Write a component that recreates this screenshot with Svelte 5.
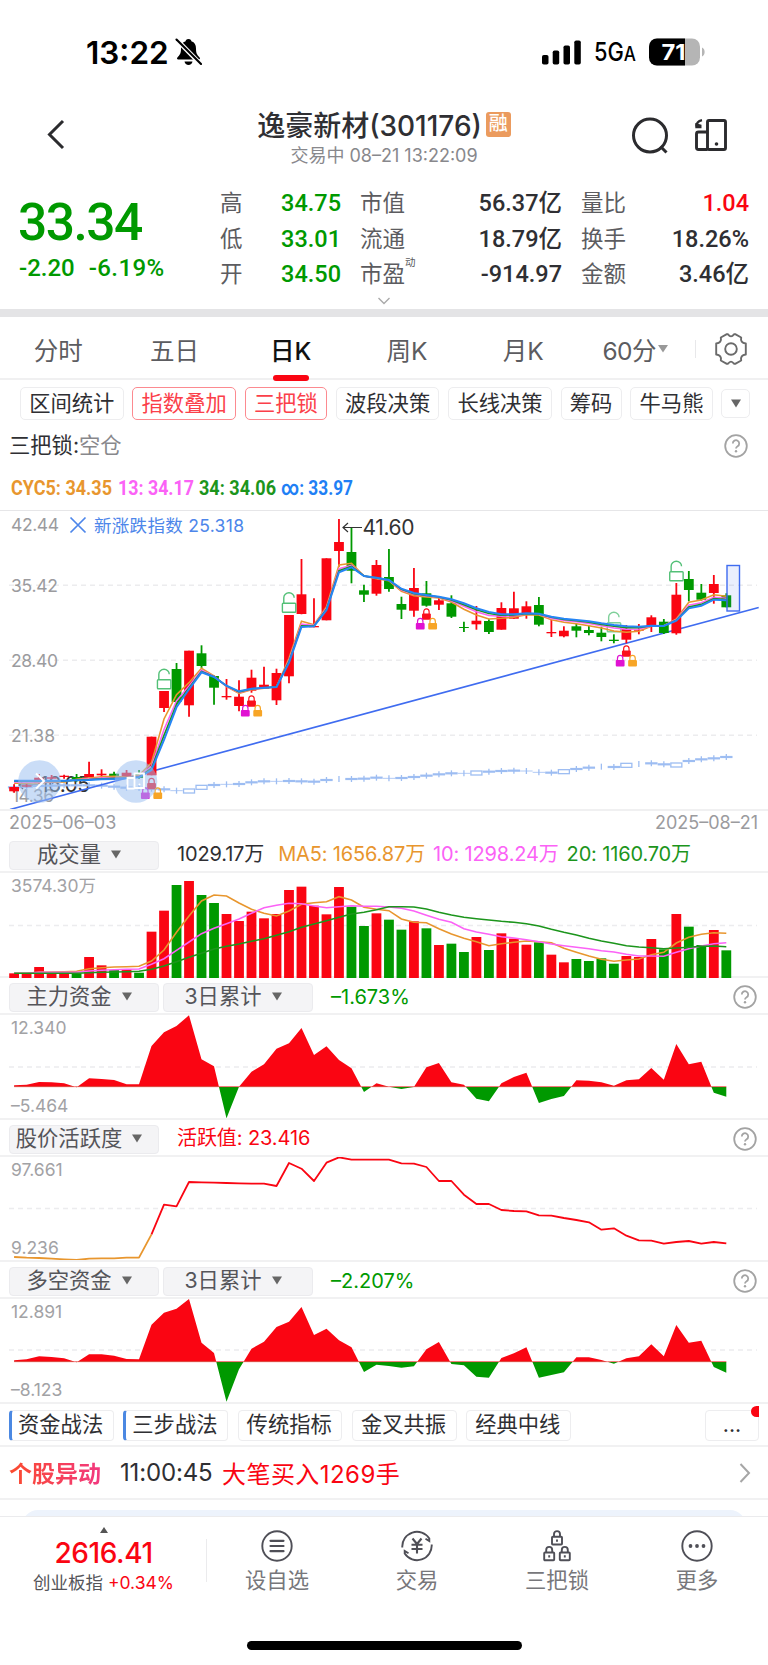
<script>
  const step = 12.495;
  const cx = (i) => 14.1 + i * step;

  // up/down, high, body top, body bottom, low
  const candles = [
    ['r', 784.3, 787, 791.3, 792.7], ['r', 782.7, 785.3, 786.7, 787.3], ['r', 774, 777.7, 783.3, 784],
    ['r', 775, 777.3, 778.7, 779.3], ['r', 774.7, 775.7, 777, 778.7], ['g', 774, 777, 779.3, 781.7],
    ['r', 761.7, 774, 777.3, 777.3], ['r', 769.3, 773.7, 775.3, 780], ['g', 771.7, 773.7, 776.7, 777.3],
    ['r', 770, 772.7, 777.3, 777.3], ['g', 770, 773.3, 778, 778.7], ['r', 736.7, 736.7, 775.3, 775.3],
    ['r', 691, 691, 708, 712], ['g', 663, 669, 702, 704], ['r', 650.7, 650.7, 705.3, 716.7],
    ['g', 645.3, 653.3, 666, 668], ['g', 675.3, 676, 687.7, 704.7], ['r', 679, 696, 697.3, 699.7],
    ['r', 680.3, 696.7, 706, 711.3], ['r', 669.7, 677.7, 690.7, 692.7], ['r', 666.7, 684.7, 688.7, 688.7],
    ['r', 668.7, 673, 700.3, 705], ['r', 615, 615, 676.3, 683.3], ['r', 559, 594.3, 614, 614.3],
    ['r', 598.3, 626, 627.3, 627.3], ['r', 558.3, 558.3, 620.3, 620.3], ['r', 519, 542, 551, 566.7],
    ['g', 527.3, 552, 570.7, 583.3], ['g', 584.7, 590.3, 594.7, 602], ['r', 560, 565, 593.7, 595.7],
    ['g', 549, 577, 589, 591.7], ['g', 596.7, 604, 609.7, 619], ['r', 568, 588, 610.7, 616.7],
    ['g', 581, 593.3, 605.7, 606.7], ['r', 596.7, 600.3, 604.7, 610], ['g', 595.3, 603.3, 616.7, 618],
    ['g', 621.7, 627, 628, 632], ['r', 606, 620.7, 624.3, 629.7], ['g', 619.3, 621, 632, 634],
    ['r', 602.3, 608, 629.7, 629.7], ['r', 591.7, 608.3, 618.7, 618.7], ['r', 601.3, 606.3, 613.3, 618.7],
    ['g', 597, 605, 624.7, 626.3], ['r', 620, 632, 633.3, 637], ['r', 626.3, 630.7, 636.3, 637.3],
    ['g', 624, 626.3, 630.7, 637.3], ['g', 626, 630, 633, 635.3], ['g', 626.7, 632.7, 637, 641.3],
    ['g', 634.3, 639.7, 641, 643.3], ['r', 625, 629, 639.7, 643.3], ['r', 624, 629.7, 630.7, 634.3],
    ['r', 615.3, 617.3, 626, 632], ['g', 619, 621.7, 633, 634], ['r', 583, 594.7, 633.3, 634.7],
    ['g', 571, 579, 590, 601.3], ['g', 584, 592.7, 599.7, 600.7], ['r', 575, 584, 593, 603.7],
    ['g', 593.3, 595.3, 607.3, 607.3]
  ];

  // line values are stored as thirds of a pixel below the given top
  const slow = [842, 842, 842, 842, 842, 841, 840, 838, 837, 835, 832, 810, 720, 622, 568, 517, 531, 557, 574, 566, 563, 561, 488, 381, 379, 330, 217, 202, 228, 233, 240, 266, 279, 285, 290, 298, 310, 325, 336, 343, 343, 340, 341, 350, 356, 360, 364, 370, 375, 379, 380, 377, 378, 362, 325, 317, 299, 301];
  const fast = [850, 850, 848, 847, 846, 838, 834, 830, 829, 832, 826, 788, 657, 584, 548, 505, 528, 560, 580, 569, 565, 560, 475, 364, 374, 320, 195, 190, 228, 236, 242, 274, 287, 291, 294, 306, 328, 345, 357, 355, 352, 344, 345, 359, 367, 371, 377, 384, 393, 397, 394, 379, 377, 357, 307, 300, 284, 289];
  const mix = (k) => slow.map((v, i) => v + (fast[i] - v) * k);

  const indexLine = [862, 860, 858, 857, 856, 856, 856, 857, 860, 863, 864, 866, 868, 872, 873, 862, 855, 853, 852, 847, 844, 844, 843, 844, 845, 840, 837, 837, 836, 833, 835, 834, 831, 827, 823, 820, 820, 819, 815, 813, 812, 813, 817, 818, 815, 807, 803, 800, 801, 796, 792, 790, 793, 795, 783, 778, 775, 771];
  const hollow = [14, 15, 37, 44, 49, 53];
  const thin = [13, 17, 21, 30, 36, 41, 42];
  const bare = [26, 47, 50];

  const volume = [430, 432, 411, 428, 430, 430, 381, 406, 420, 418, 428, 305, 242, 165, 153, 195, 219, 252, 273, 245, 265, 252, 180, 170, 227, 253, 171, 230, 288, 250, 269, 299, 274, 295, 345, 341, 366, 321, 360, 310, 326, 344, 337, 374, 397, 387, 393, 385, 401, 378, 381, 327, 358, 252, 290, 345, 300, 361];
  const volMa5 = [430, 430, 427, 426, 425, 424, 416, 413, 411, 410, 409, 393, 360, 307, 258, 213, 195, 198, 219, 238, 250, 258, 243, 223, 218, 215, 200, 210, 232, 238, 242, 267, 277, 278, 296, 312, 325, 335, 347, 341, 337, 333, 335, 338, 355, 367, 378, 388, 394, 390, 387, 374, 367, 339, 322, 313, 308, 310];
  const volMa10 = [430, 430, 427, 427, 427, 427, 423, 421, 419, 418, 417, 403, 386, 361, 336, 311, 295, 281, 267, 250, 233, 226, 220, 221, 228, 233, 230, 227, 229, 229, 231, 235, 243, 256, 268, 277, 296, 306, 313, 320, 324, 329, 335, 342, 347, 352, 356, 362, 366, 373, 378, 378, 379, 367, 356, 348, 341, 338];
  const volMa20 = [430, 430, 430, 430, 430, 430, 428, 427, 426, 425, 424, 418, 408, 395, 382, 370, 357, 349, 342, 334, 326, 316, 305, 292, 282, 272, 262, 252, 247, 239, 230, 230, 231, 237, 247, 255, 262, 266, 270, 274, 277, 281, 288, 298, 307, 315, 325, 333, 340, 347, 351, 353, 356, 354, 352, 349, 348, 350];

  const mainFlow = [766, 764, 756, 757, 760, 772, 745, 747, 750, 763, 763, 648, 607, 588, 556, 688, 709, 865, 770, 725, 703, 656, 640, 594, 675, 649, 690, 715, 786, 760, 770, 777, 771, 712, 699, 757, 764, 806, 814, 760, 741, 728, 819, 807, 798, 751, 752, 757, 767, 751, 748, 714, 749, 642, 703, 695, 788, 800];
  const bothFlow = [721, 718, 709, 711, 715, 727, 703, 703, 707, 717, 718, 614, 578, 566, 537, 668, 699, 845, 748, 686, 665, 621, 605, 561, 645, 626, 661, 682, 756, 734, 738, 743, 739, 688, 666, 732, 736, 770, 773, 714, 700, 682, 773, 765, 757, 712, 712, 720, 731, 715, 709, 673, 709, 615, 668, 662, 741, 758];
  const active = [411, 413, 414, 416, 418, 420, 416, 415, 415, 413, 413, 343, 254, 259, 186, 187, 188, 189, 190, 191, 191, 198, 129, 146, 183, 128, 112, 119, 119, 119, 119, 130, 131, 141, 183, 183, 224, 252, 252, 270, 273, 274, 286, 287, 294, 300, 307, 329, 325, 347, 361, 362, 371, 366, 363, 371, 366, 370];

  const line = (values, top, from = 0) =>
    values.map((v, i) => `${cx(i + from).toFixed(1)},${(top + v / 3).toFixed(1)}`).join(' ');

  const quotes = [
    ['高', '34.75', '市值', '56.37亿', '量比', '1.04'],
    ['低', '33.01', '流通', '18.79亿', '换手', '18.26%'],
    ['开', '34.50', '市盈', '-914.97', '金额', '3.46亿']
  ];
  const periods = ['分时', '五日', '日K', '周K', '月K'];
  const tools = ['区间统计', '指数叠加', '三把锁', '波段决策', '长线决策', '筹码', '牛马熊'];
  const methods = ['资金战法', '三步战法', '传统指标', '金叉共振', '经典中线'];

  let period = $state('日K');
  let picked = $state(['指数叠加', '三把锁']);

  const toggle = (name) => {
    picked = picked.includes(name) ? picked.filter((t) => t !== name) : [...picked, name];
  };
</script>

{#snippet help()}
  <svg class="help" width="24" height="24" viewBox="0 0 24 24">
    <circle cx="12" cy="12" r="10.8" fill="none" stroke="#a3a3a3" stroke-width="1.8" />
    <path d="M8.8 9.4a3.2 3.2 0 1 1 4.8 2.8c-1.2.7-1.6 1.2-1.6 2.4" fill="none" stroke="#a3a3a3" stroke-width="1.8" />
    <circle cx="12" cy="17.3" r="1.2" fill="#a3a3a3" />
  </svg>
{/snippet}

{#snippet caret()}
  <svg class="caret" width="10" height="9" viewBox="0 0 10 9"><path d="M0 .5h10L5 8.5z" fill="#666" /></svg>
{/snippet}

{#snippet lock(x, y, color)}
  <path d="M{x - 2.7} {y + 7}v-3.2a2.7 3 0 0 1 5.4 0v3.2" fill="none" stroke={color} stroke-width="1.2" />
  <rect x={x - 4.4} y={y + 5.4} width="8.8" height="6.4" rx="1" fill={color} />
{/snippet}

{#snippet locks(i, y)}
  {@render lock(cx(i), y, '#fa0f1c')}
  {@render lock(cx(i) - 6.2, y + 9.6, '#e012d2')}
  {@render lock(cx(i) + 6.2, y + 9.6, '#f7a526')}
{/snippet}

{#snippet unlock(i, y)}
  <g fill="none" stroke="#53c077" stroke-width="1.4">
    <rect x={cx(i) - 6.6} y={y + 10.8} width="13.4" height="9" rx="0.8" />
    <path d="M{cx(i) - 5.2} {y + 10.8}v-5.6a5.2 4.9 0 0 1 10.4 0" />
  </g>
{/snippet}

{#snippet flow(values, top, viewTop, base, grid, id)}
  <svg class="pane" width="768" height="103" viewBox="0 {viewTop} 768 103">
    <line x1="9" x2="757" y1={grid} y2={grid} class="dash" />
    <clipPath id="{id}-up"><rect x="0" y={viewTop} width="768" height={base - viewTop} /></clipPath>
    <clipPath id="{id}-down"><rect x="0" y={base} width="768" height="60" /></clipPath>
    <polygon points="{cx(0)},{base} {line(values, top)} {cx(57)},{base}" fill="#fa0512" clip-path="url(#{id}-up)" />
    <polygon points="{cx(0)},{base} {line(values, top)} {cx(57)},{base}" fill="#009900" clip-path="url(#{id}-down)" />
    <line x1={cx(0)} x2={cx(57)} y1={base} y2={base} stroke="#fa0512" stroke-width="1" opacity="0.5" />
  </svg>
{/snippet}

<div class="screen">
  <div class="status">
    <span class="clock">13:22</span>
    <svg class="bell" width="27" height="28" viewBox="0 0 27 28">
      <path d="M13.5 1c-2 0-2.800 1.200-2.900 2.200C7.300 4.300 6 7 6 10.500c0 5-1.200 6.500-3.600 9-.8.800-.4 2 .8 2h20.600c1.200 0 1.600-1.200.8-2-2.400-2.500-3.600-4-3.600-9 0-3.500-1.300-6.200-4.600-7.300C16.300 2.200 15.500 1 13.500 1z" />
      <path d="M9.500 23.500h8c-.4 2.200-1.900 3.500-4 3.500s-3.600-1.300-4-3.500z" />
      <path d="M0 0l27 27.500" stroke="#fff" stroke-width="4.600" />
      <path d="M1.500 1.500l24.500 24.500" stroke="#000" stroke-width="2.100" stroke-linecap="round" />
    </svg>
    <svg class="signal" width="40" height="25" viewBox="0 0 40 25">
      <rect x="0" y="15" width="6.500" height="9.500" rx="1.800" />
      <rect x="10.700" y="10.500" width="6.500" height="14" rx="1.800" />
      <rect x="21.500" y="5.500" width="6.500" height="19" rx="1.800" />
      <rect x="32.300" y="0.500" width="6.500" height="24" rx="1.800" />
    </svg>
    <svg class="net" width="55" height="28" viewBox="0 0 55 28">
      <text x="0" y="23" textLength="42" lengthAdjust="spacingAndGlyphs">5G<tspan font-size="20">A</tspan></text>
    </svg>
    <svg class="battery" width="56" height="28" viewBox="0 0 56 28">
      <clipPath id="cell"><rect x="0" y="0.500" width="51" height="27" rx="8" /></clipPath>
      <g clip-path="url(#cell)">
        <rect width="51" height="28" fill="#b5b5b5" />
        <rect width="36" height="28" fill="#000" />
      </g>
      <path d="M53 9.500c3.500 1.500 3.500 7.500 0 9z" fill="#b5b5b5" />
      <text x="24.500" y="22" text-anchor="middle" textLength="24" lengthAdjust="spacingAndGlyphs">71</text>
    </svg>
  </div>

  <header>
    <svg class="back" width="20" height="32" viewBox="0 0 20 32"><path d="M17 2L3.500 15.500L17 29" fill="none" stroke="#2b2b2e" stroke-width="3" /></svg>
    <div class="title">
      <div class="name">逸豪新材(301176)<span class="margin">融</span></div>
      <div class="time">交易中 08–21 13:22:09</div>
    </div>
    <svg class="search" width="40" height="40" viewBox="0 0 40 40">
      <circle cx="19" cy="19.500" r="16.500" fill="none" stroke="#2b2b2e" stroke-width="3" />
      <path d="M29.500 30.500l6 6" stroke="#2b2b2e" stroke-width="3" />
    </svg>
    <svg class="rotate" width="34" height="34" viewBox="0 0 34 34" fill="none" stroke="#2b2b2e" stroke-width="2.900">
      <rect x="13.500" y="2.500" width="18" height="29" rx="1.500" />
      <path d="M13.500 14H4.500q-2 0-2 2v13.500q0 2 2 2h9" />
      <path d="M2.500 8.500Q2.300 3.500 8 2.200" stroke-width="2.400" />
      <path d="M1.300 5v5.200h6.200V6.800z" fill="#2b2b2e" stroke="none" />
      <circle cx="22.500" cy="26" r="1.800" fill="#2b2b2e" stroke="none" />
    </svg>
  </header>

  <section class="quote">
    <div class="last">
      <strong>33.34</strong>
      <span>-2.20</span><span class="pct">-6.19%</span>
    </div>
    <div class="grid">
      {#each quotes as row, r}
        <span class="key">{row[0]}</span><span class="val down">{row[1]}</span>
        <span class="key">{row[2]}{#if r === 2}<sup>动</sup>{/if}</span><span class="val">{row[3]}</span>
        <span class="key">{row[4]}</span><span class="val" class:up={r === 0}>{row[5]}</span>
      {/each}
    </div>
    <svg class="more" width="14" height="8" viewBox="0 0 14 8"><path d="M1.500 1L7 6.500L12.500 1" fill="none" stroke="#aaa" stroke-width="1.400" /></svg>
  </section>

  <nav class="periods">
    {#each periods as p}
      <button class:on={period === p} onclick={() => (period = p)}>{p}</button>
    {/each}
    <button class="minutes">60分<svg width="10" height="8" viewBox="0 0 10 8"><path d="M0 0h10L5 7.500z" fill="#999" /></svg></button>
    <i class="sep"></i>
    <svg class="gear" width="34" height="34" viewBox="-17 -17 34 34" fill="none" stroke="#6a6a6a" stroke-width="1.900" stroke-linejoin="round">
      <path d="M-4.200 -14.800H-3Q0 -10.500 3 -14.800H4.200L10.200 -11.500Q9 -6.300 14.800 -5.500V5.500Q9 6.300 10.200 11.500L4.200 14.800H3Q0 10.500 -3 14.800H-4.200L-10.200 11.500Q-9 6.300 -14.800 5.500V-5.500Q-9 -6.300 -10.200 -11.500Z" />
      <circle r="5.800" />
    </svg>
  </nav>

  <div class="tools">
    {#each tools as t}
      <button class:on={picked.includes(t)} onclick={() => toggle(t)}>{t}</button>
    {/each}
    <button class="drop">{@render caret()}</button>
  </div>

  <div class="state"><span>三把锁:<em>空仓</em></span>{@render help()}</div>

  <svg class="legend" width="768" height="43" viewBox="0 0 768 43">
    <text x="11" y="27" textLength="101" lengthAdjust="spacingAndGlyphs" fill="#e8962e">CYC5: 34.35</text>
    <text x="118" y="27" textLength="76" lengthAdjust="spacingAndGlyphs" fill="#fb62f6">13: 34.17</text>
    <text x="199" y="27" textLength="77" lengthAdjust="spacingAndGlyphs" fill="#1c951c">34: 34.06</text>
    <text x="281" y="27" textLength="72" lengthAdjust="spacingAndGlyphs" fill="#1f80f5">∞: 33.97</text>
  </svg>

  <svg class="pane main" width="768" height="298" viewBox="0 511 768 298">
    {#each [585.3, 660.3, 735.3] as y}
      <line x1="9" x2="757" y1={y} y2={y} class="dash" />
    {/each}
    <g class="axis">
      <text x="11" y="531" textLength="48">42.44</text>
      <text x="11" y="592" textLength="47">35.42</text>
      <text x="11" y="667" textLength="47">28.40</text>
      <text x="11" y="742" textLength="44">21.38</text>
      <text x="12" y="802" textLength="42">14.36</text>
    </g>
    <path d="M70.500 517.500l15 15m0-15l-15 15" stroke="#4d86ea" stroke-width="1.700" />
    <text class="index" x="94" y="532" textLength="150">新涨跌指数 25.318</text>
    <text class="mark" x="40" y="791.500" textLength="50">16.05</text>
    <path d="M38 785H19m4-4l-4 4l4 4" fill="none" stroke="#333" stroke-width="1.200" />

    <g stroke="#9dbdf2" fill="none">
      {#each indexLine as v, i}
        {@const y = 500 + v / 3}
        {#if hollow.includes(i)}
          <rect x={cx(i) - 5.5} y={y - 2} width="11" height="4" fill="#fff" stroke-width="1.300" />
        {:else if !bare.includes(i)}
          <line x1={cx(i) - 6.2} x2={cx(i) + 6.2} y1={y} y2={y} stroke-width={thin.includes(i) ? 0.8 : 2.2} />
        {/if}
        <line x1={cx(i)} x2={cx(i)} y1={y - 3} y2={y + 3} stroke-width={hollow.includes(i) ? 0 : 1.3} />
      {/each}
    </g>

    <line x1="10" y1="809.500" x2="758.700" y2="607.500" stroke="#3f6cf0" stroke-width="1.600" />

    {#each candles as [dir, high, top, bottom, low], i}
      {@const color = dir === 'r' ? '#fa0512' : '#009900'}
      <line x1={cx(i)} x2={cx(i)} y1={high} y2={low} stroke={color} stroke-width="1.800" />
      <rect x={cx(i) - 4.9} y={top} width="9.800" height={bottom - top} fill={color} />
    {/each}

    {@render unlock(12, 669)}
    {@render unlock(22, 592.5)}
    <g opacity="0.75">{@render unlock(48, 612)}</g>
    {@render unlock(53, 561)}

    <g fill="none" stroke-width="1.600">
      <polyline points={line(fast, 500)} stroke="#e8962e" />
      <polyline points={line(mix(0.5), 500)} stroke="#fb62f6" />
      <polyline points={line(mix(0.22), 500)} stroke="#1c951c" />
      <polyline points={line(slow, 500)} stroke="#2585f5" stroke-width="2" />
    </g>

    {@render locks(11, 777.5)}
    {@render locks(19, 695)}
    {@render locks(33, 608)}
    {@render locks(49, 645)}

    <path d="M362 527.500H343m5-4.500l-5 4.500l5 4.500" fill="none" stroke="#333" stroke-width="1.200" />
    <text class="mark" x="362.500" y="535.200" textLength="52">41.60</text>

    <rect x="727" y="565.500" width="12.500" height="45.500" fill="#3f6cf0" fill-opacity="0.110" stroke="#3f6cf0" stroke-width="1.400" />

    <circle cx="39.500" cy="781.500" r="21.300" fill="#9abdf0" opacity="0.52" />
    <circle cx="136" cy="781.500" r="21.300" fill="#9abdf0" opacity="0.52" />
    <path d="M36 773.500l8 7.500l-8 7.500" fill="none" stroke="#fff" stroke-width="2" />
    <g fill="none" stroke="#fff" stroke-width="1.800">
      <path d="M134.500 788V773.500h9.500V788zM134.500 778h-7v10.500h7" />
    </g>
    <circle cx="139.500" cy="784.500" r="1" fill="#fff" />
  </svg>

  <div class="dates"><span>2025–06–03</span><span>2025–08–21</span></div>

  <div class="bar">
    <button>成交量{@render caret()}</button>
    <span class="nums"><b>1029.17万</b><b class="c5">MA5: 1656.87万</b><b class="c10">10: 1298.24万</b><b class="c20">20: 1160.70万</b></span>
  </div>
  <div class="box">
    <span class="hi">3574.30万</span>
    <svg class="pane" width="768" height="105" viewBox="0 873 768 105">
      <line x1="9" x2="757" y1="925.500" y2="925.500" class="dash" />
      <line x1="0" x2="768" y1="977" y2="977" stroke="#f1f1f2" stroke-width="2" />
      {#each volume as v, i}
        <rect x={cx(i) - 4.9} y={830 + v / 3} width="9.800" height={148 - v / 3} fill={candles[i][0] === 'r' ? '#fa0512' : '#009900'} />
      {/each}
      <g fill="none" stroke-width="1.600">
        <polyline points={line(volMa5, 830)} stroke="#e8962e" />
        <polyline points={line(volMa10, 830)} stroke="#fb62f6" />
        <polyline points={line(volMa20, 830)} stroke="#1c951c" />
      </g>
    </svg>
  </div>

  <div class="bar">
    <button>主力资金{@render caret()}</button><button class="cycle">3日累计{@render caret()}</button>
    <span class="result">–1.673%</span>{@render help()}
  </div>
  <div class="box lined">
    <span class="hi">12.340</span><span class="lo">–5.464</span>
    {@render flow(mainFlow, 830, 1015, 1086.7, 1067, 'main')}
  </div>

  <div class="bar">
    <button>股价活跃度{@render caret()}</button>
    <span class="result live">活跃值: 23.416</span>{@render help()}
  </div>
  <div class="box lined">
    <span class="hi">97.661</span><span class="lo">9.236</span>
    <svg class="pane" width="768" height="103" viewBox="0 1157 768 103">
      <line x1="9" x2="757" y1="1208.500" y2="1208.500" class="dash" />
      <g fill="none" stroke-width="1.800" stroke-linejoin="round">
        <polyline points={line(active.slice(0, 12), 1120)} stroke="#e8962e" />
        <polyline points={line(active.slice(11), 1120, 11)} stroke="#fa0512" />
      </g>
    </svg>
  </div>

  <div class="bar">
    <button>多空资金{@render caret()}</button><button class="cycle">3日累计{@render caret()}</button>
    <span class="result">–2.207%</span>{@render help()}
  </div>
  <div class="box lined">
    <span class="hi">12.891</span><span class="lo">–8.123</span>
    {@render flow(bothFlow, 1120, 1299, 1361.7, 1350, 'both')}
  </div>

  <div class="methods">
    {#each methods as m, i}
      <span class:bar-left={i < 2}>{m}</span>
    {/each}
    <span class="dots">...<i></i></span>
  </div>

  <div class="alert">
    <strong>个股异动</strong><span>11:00:45</span><em>大笔买入1269手</em>
    <svg width="12" height="22" viewBox="0 0 12 22"><path d="M1.500 2L10 11L1.500 20" fill="none" stroke="#a6a6a6" stroke-width="2" /></svg>
  </div>
  <div class="peek"><i></i></div>

  <footer>
    <div class="market">
      <svg width="8" height="6" viewBox="0 0 8 6"><path d="M4 0l4 6H0z" fill="#555" /></svg>
      <strong>2616.41</strong>
      <span>创业板指 <em>+0.34%</em></span>
    </div>
    <div class="item">
      <svg width="32" height="32" viewBox="0 0 32 32">
        <circle cx="16" cy="16" r="14.700" />
        <path d="M9.500 10.800h13M9.500 16h13M9.500 21.200h13" stroke-width="2.200" stroke-linecap="round" />
      </svg>
      设自选
    </div>
    <div class="item">
      <svg width="32" height="32" viewBox="0 0 32 32">
        <path d="M1.300 17.500A14.700 14.700 0 0 1 28.300 8.500V11L24.500 8.800M30.700 14.500A14.700 14.700 0 0 1 3.700 23.500V21L7.500 23.200" />
        <path d="M11.500 8.500l4.500 5.500l4.500-5.500M16 14v9.500M10.500 14.800h11M10.500 19h11" stroke-width="2.100" />
      </svg>
      交易
    </div>
    <div class="item">
      <svg width="32" height="32" viewBox="0 0 32 32">
        {#each [[16, 0.5], [8.2, 16.3], [23.8, 16.3]] as [x, y]}
          <rect x={x - 5} y={y + 6.2} width="10" height="7.800" rx="0.800" />
          <path d="M{x - 3} {y + 6.2}V{y + 3.6}a3 3 0 0 1 6 0v2.600M{x} {y + 9}v2.200" />
        {/each}
      </svg>
      三把锁
    </div>
    <div class="item">
      <svg width="32" height="32" viewBox="0 0 32 32">
        <circle cx="16" cy="16" r="14.700" />
        <g fill="#4f4f57" stroke="none"><circle cx="9.500" cy="16" r="1.900" /><circle cx="16" cy="16" r="1.900" /><circle cx="22.500" cy="16" r="1.900" /></g>
      </svg>
      更多
    </div>
  </footer>
  <div class="home"></div>
</div>

<style>
  :global(body) {
    margin: 0;
    background: #fff;
  }
  .screen {
    width: 768px;
    height: 1665px;
    overflow: hidden;
    display: flex;
    flex-direction: column;
    background: #fff;
    color: #2f2f33;
    font-family: Inter, 'Noto Sans CJK SC', sans-serif;
    box-sizing: border-box;
  }
  .screen > * {
    flex: none;
    box-sizing: border-box;
  }
  svg {
    display: block;
    flex: none;
  }
  button {
    font: inherit;
    color: inherit;
    background: none;
    border: 0;
    padding: 0;
    box-sizing: border-box;
  }
  em, i {
    font-style: normal;
  }

  .status {
    height: 105px;
    padding: 0 0 1px 86px;
    display: flex;
    align-items: center;
    color: #000;
  }
  .clock {
    width: 84px;
    font-size: 31.5px;
    font-weight: 600;
    letter-spacing: 0;
  }
  .bell {
    margin-left: 5px;
  }
  .signal {
    margin-left: 340px;
  }
  .net {
    margin-left: 12px;
    font-size: 25.500px;
    font-weight: 500;
  }
  .battery {
    font-size: 22px;
    font-weight: 700;
    fill: #fff;
  }

  header {
    height: 85px;
    padding: 2px 40px 0 46px;
    display: flex;
    align-items: flex-start;
  }
  .back {
    margin-top: 12px;
  }
  .title {
    width: 436px;
    margin-left: 100px;
    text-align: center;
  }
  .name {
    display: flex;
    justify-content: center;
    align-items: center;
    height: 34px;
    font-size: 28px;
    font-weight: 500;
    letter-spacing: 0;
    white-space: nowrap;
  }
  .margin {
    width: 25px;
    height: 25px;
    margin-left: 4px;
    border-radius: 3px;
    background: #eb9b5e;
    color: #fff;
    font-size: 19px;
    line-height: 24px;
  }
  .time {
    margin-top: 2px;
    line-height: 26px;
    font-size: 18px;
    color: #88888c;
  }
  .search {
    margin: 9px 0 0 29px;
  }
  .rotate {
    margin: 11px 0 0 23px;
  }

  .quote {
    height: 127px;
    padding-left: 19px;
    display: grid;
    grid-template-columns: 201px 1fr;
    border-bottom: 8px solid #e4e4e6;
    font-family: Roboto, 'Noto Sans CJK SC', sans-serif;
    align-content: start;
  }
  .last {
    color: #009900;
    font-weight: 500;
    font-size: 24px;
  }
  .last strong {
    display: block;
    margin: 4px 0 0 -1px;
    height: 58px;
    line-height: 58px;
    font-size: 51.500px;
    font-weight: 500;
    letter-spacing: -1.500px;
  }
  .last span {
    display: inline-block;
    line-height: 32px;
  }
  .last .pct {
    margin-left: 14px;
    letter-spacing: 0.400px;
  }
  .grid {
    display: grid;
    grid-template-columns: 50px 71px 19px 92px 110px 19px 62px 106px;
    grid-template-rows: 35.500px 35.500px 35.500px;
    line-height: 35.500px;
    margin-top: -4px;
  }
  .key {
    font-size: 22.500px;
    color: #5c5c60;
    white-space: nowrap;
  }
  .key:nth-child(6n + 1) { grid-column: 1; }
  .key:nth-child(6n + 3) { grid-column: 4; }
  .key:nth-child(6n + 5) { grid-column: 7; }
  .val:nth-child(6n + 2) { grid-column: 2; }
  .val:nth-child(6n + 4) { grid-column: 5; }
  .val:nth-child(6n + 6) { grid-column: 8; }
  .val {
    text-align: right;
    font-size: 23.500px;
    font-weight: 500;
  }
  .key sup {
    font-size: 10.500px;
    line-height: 0;
    vertical-align: 16px;
  }
  .down { color: #009900; }
  .up { color: #fa0512; }
  .more {
    grid-column: 1 / 3;
    margin: 4px 0 0 358px;
  }

  .periods {
    height: 63px;
    display: flex;
    align-items: center;
    padding: 3px 0 0;
    border-bottom: 2px solid #f0f0f1;
    font-size: 24.500px;
    color: #5c5c60;
  }
  .periods button {
    width: 116.300px;
    height: 60px;
    position: relative;
  }
  .periods .on {
    color: #111;
    font-weight: 500;
  }
  .periods .on::after {
    content: '';
    position: absolute;
    left: 40px;
    bottom: -2px;
    width: 36px;
    height: 6px;
    border-radius: 3px;
    background: #fa0512;
  }
  .periods .minutes {
    width: 72px;
    margin-left: 21px;
    display: flex;
    align-items: center;
    white-space: nowrap;
    letter-spacing: -0.600px;
  }
  .minutes svg {
    margin-left: 2px;
  }
  .sep {
    width: 1px;
    height: 18px;
    margin: 0 18px 0 21px;
    background: #e8e8ea;
  }

  .tools {
    height: 48px;
    padding: 7px 0 0 20px;
    display: flex;
    gap: 8.800px;
    font-size: 21.300px;
  }
  .tools button {
    height: 33px;
    padding: 0 8.200px;
    border: 1.500px solid #ededef;
    border-radius: 5px;
    line-height: 27px;
  }
  .tools .on {
    color: #fb3f4a;
    border-color: #fc8a90;
  }
  .tools .drop {
    width: 29px;
    height: 29px;
    margin-top: 2px;
  }

  .state {
    height: 40px;
    padding: 0 20px 4px 10px;
    display: flex;
    justify-content: space-between;
    align-items: center;
    font-size: 21.300px;
    line-height: 24px;
  }
  .state span {
    margin: -3px 0 0 -1px;
  }
  .state em {
    color: #88888c;
  }
  .legend {
    font: 700 21px Roboto, sans-serif;
  }

  .pane {
    box-sizing: content-box;
  }
  .main {
    border-top: 1px solid #e6e6e8;
    border-bottom: 2px solid #f0f0f1;
    margin: -1px 0;
  }
  .lined {
    border-bottom: 2px solid #f1f1f2;
  }
  .dash {
    stroke: #ececee;
    stroke-width: 1.5;
    stroke-dasharray: 5 4;
  }
  .axis {
    font-size: 17.500px;
    fill: #9b9b9e;
  }
  .index {
    font-size: 17.500px;
    fill: #4d86ea;
  }
  .mark {
    font-size: 21px;
    fill: #333;
  }
  .dates {
    height: 26px;
    padding: 0 10px 1px 9px;
    display: flex;
    justify-content: space-between;
    align-items: center;
    font-size: 18px;
    color: #9b9b9e;
  }

  .bar {
    height: 37px;
    padding: 3px 11px 0 9px;
    display: flex;
    align-items: center;
    border-bottom: 2px solid #f1f1f2;
    font-size: 20px;
    line-height: 24px;
  }
  .bar button {
    width: 150px;
    height: 29px;
    padding: 0 10px 3px 0;
    margin-right: 4px;
    display: flex;
    align-items: center;
    justify-content: center;
    gap: 10px;
    border: 1px solid #ebebee;
    border-radius: 4px;
    background: #f4f4f6;
    color: #55555a;
    font-size: 21.300px;
    white-space: nowrap;
  }
  .bar button :global(.caret) {
    margin-top: 2px;
  }
  .bar :global(.help) {
    margin-left: auto;
  }
  .nums {
    display: flex;
    gap: 8px;
    margin: -3px 0 0 14px;
    white-space: nowrap;
  }
  .nums b {
    font-weight: 400;
    letter-spacing: -0.150px;
  }
  .nums .c5 { color: #e8962e; margin-left: 6px; }
  .nums .c10 { color: #fb62f6; }
  .nums .c20 { color: #1c951c; }
  .result {
    margin: -1px 0 0 14px;
    color: #009900;
    letter-spacing: 0;
  }
  .live {
    color: #fa0512;
    margin-top: -3px;
    letter-spacing: -0.100px;
  }
  .box {
    height: 105px;
    position: relative;
  }
  .hi, .lo {
    position: absolute;
    left: 11px;
    font-size: 17.500px;
    line-height: 22px;
    color: #a2a2a5;
  }
  .hi { top: 2px; }
  .lo { bottom: 1px; }

  .methods {
    height: 43px;
    padding: 6px 9px 0;
    display: flex;
    gap: 9.500px;
    border-bottom: 2px solid #f1f1f2;
    font-size: 21.300px;
  }
  .methods span {
    height: 31px;
    padding: 0 8px;
    box-sizing: border-box;
    border: 1.500px solid #ededef;
    border-radius: 4px;
    line-height: 26px;
    width: 104.800px;
    white-space: nowrap;
  }
  .methods .bar-left {
    border-left: 3px solid #4b88e2;
    padding-left: 6px;
  }
  .methods .dots {
    width: 54px;
    margin-left: auto;
    text-align: center;
    position: relative;
  }
  .dots i {
    position: absolute;
    top: -5px;
    right: -1px;
    width: 8px;
    height: 11px;
    border-radius: 6px 0 0 6px;
    background: #fa0512;
  }

  .alert {
    height: 53px;
    padding: 0 17px 0 9px;
    display: flex;
    align-items: center;
    font-size: 24px;
    border-bottom: 2px solid #f1f1f2;
    white-space: nowrap;
  }
  .alert strong {
    font-size: 23px;
    width: 92px;
    margin-top: -2px;
    background: linear-gradient(90deg, #fb4b2d, #f2387f);
    -webkit-background-clip: text;
    background-clip: text;
    color: transparent;
  }
  .alert span {
    width: 102px;
    margin-left: 19px;
    letter-spacing: -0.150px;
  }
  .alert em {
    color: #fa0512;
    margin-top: -1px;
    letter-spacing: 0.450px;
  }
  .alert svg {
    margin-left: auto;
  }
  .peek {
    height: 17px;
    padding: 10px 22px 0;
    overflow: hidden;
    border-bottom: 1px solid #ebebed;
  }
  .peek i {
    display: block;
    height: 40px;
    border-radius: 16px;
    background: #edf3fc;
  }

  footer {
    height: 124px;
    display: grid;
    grid-template-columns: 207px repeat(4, 140px);
    align-items: start;
  }
  .market {
    display: flex;
    flex-direction: column;
    align-items: center;
    padding-top: 10px;
    position: relative;
    font-size: 17.500px;
  }
  .market::after {
    content: '';
    position: absolute;
    right: 0;
    top: 22px;
    width: 1px;
    height: 43px;
    background: #ebebed;
  }
  .market strong {
    margin-top: 3px;
    font-size: 28px;
    line-height: 34px;
    font-weight: 500;
    letter-spacing: -0.400px;
    color: #fa0512;
  }
  .market span {
    line-height: 26px;
    white-space: nowrap;
    color: #55555a;
  }
  .market em {
    color: #fa0512;
  }
  .item {
    display: flex;
    flex-direction: column;
    align-items: center;
    padding-top: 13px;
    gap: 3px;
    font-size: 21.300px;
    line-height: 30px;
    color: #77777b;
  }
  .item svg {
    fill: none;
    stroke: #4f4f57;
    stroke-width: 1.9;
  }
  .home {
    width: 275px;
    height: 9px;
    margin: 0 auto;
    border-radius: 5px;
    background: #000;
  }
</style>
